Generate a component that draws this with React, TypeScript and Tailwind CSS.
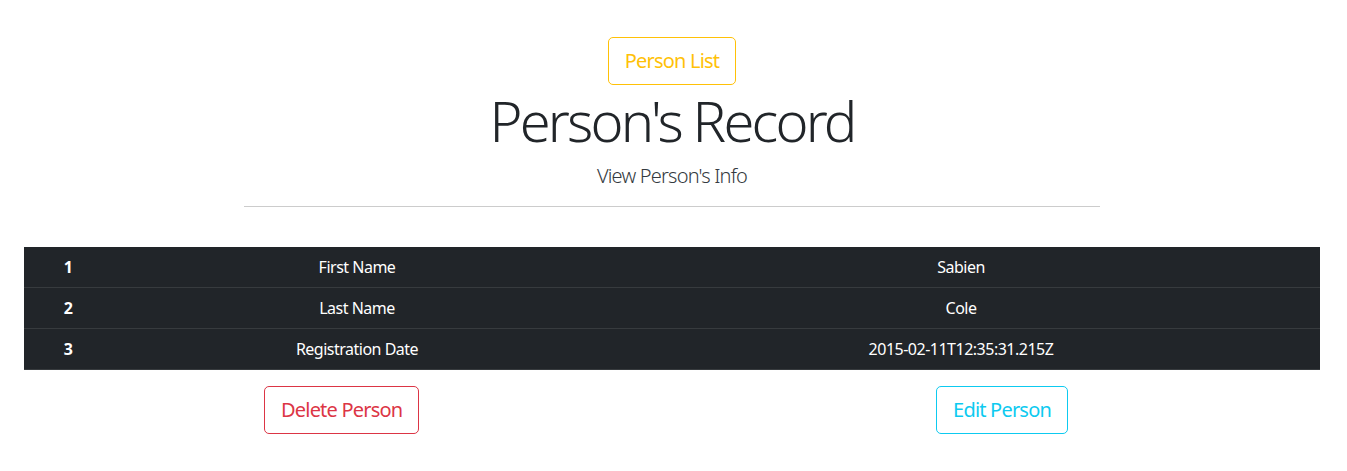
import React from "react";

type Row = { id: number; label: string; value: string };

const rows: Row[] = [
  { id: 1, label: "First Name", value: "Sabien" },
  { id: 2, label: "Last Name", value: "Cole" },
  { id: 3, label: "Registration Date", value: "2015-02-11T12:35:31.215Z" },
];

function App() {
  return (
    <div
      className="min-h-screen w-[1344px] bg-white text-[#212529]"
      style={{ fontFamily: '"Noto Sans", "Open Sans", sans-serif' }}
    >
      <div className="flex flex-col items-center pt-[37px]">
        <button
          type="button"
          className="h-12 px-4 rounded-[5px] border border-[#ffc107] text-[#ffc107] text-[20px] leading-[30px] tracking-[-0.8px]"
        >
          Person List
        </button>
        <h1 className="text-[56px] font-light leading-[1.2] mt-[2px] tracking-[-2.8px]">
          Person&apos;s Record
        </h1>
        <p className="text-[20px] font-light leading-[30px] mt-[7px] text-[#343a40] tracking-[-0.8px]">
          View Person&apos;s Info
        </p>
        <hr className="w-[856px] mt-[15px] border-t border-[#cccccc]" />
      </div>

      <div className="px-6 mt-[40px]">
        <table className="w-full text-white bg-[#212529] text-[16px] leading-6 tracking-[-0.5px]">
          <tbody>
            {rows.map((row) => (
              <tr key={row.id} className="border-b border-[#373b3e]">
                <th className="w-[88px] py-2 text-center font-bold">{row.id}</th>
                <td className="w-[490px] py-2 text-center">{row.label}</td>
                <td className="py-2 text-center">{row.value}</td>
              </tr>
            ))}
          </tbody>
        </table>

        <div className="flex justify-between pl-[240px] pr-[252px] mt-[16px]">
          <button
            type="button"
            className="h-12 px-4 rounded-[5px] border border-[#dc3545] text-[#dc3545] text-[20px] leading-[30px] tracking-[-0.8px]"
          >
            Delete Person
          </button>
          <button
            type="button"
            className="h-12 px-4 rounded-[5px] border border-[#0dcaf0] text-[#0dcaf0] text-[20px] leading-[30px] tracking-[-0.8px]"
          >
            Edit Person
          </button>
        </div>
      </div>
    </div>
  );
}

export default App;
